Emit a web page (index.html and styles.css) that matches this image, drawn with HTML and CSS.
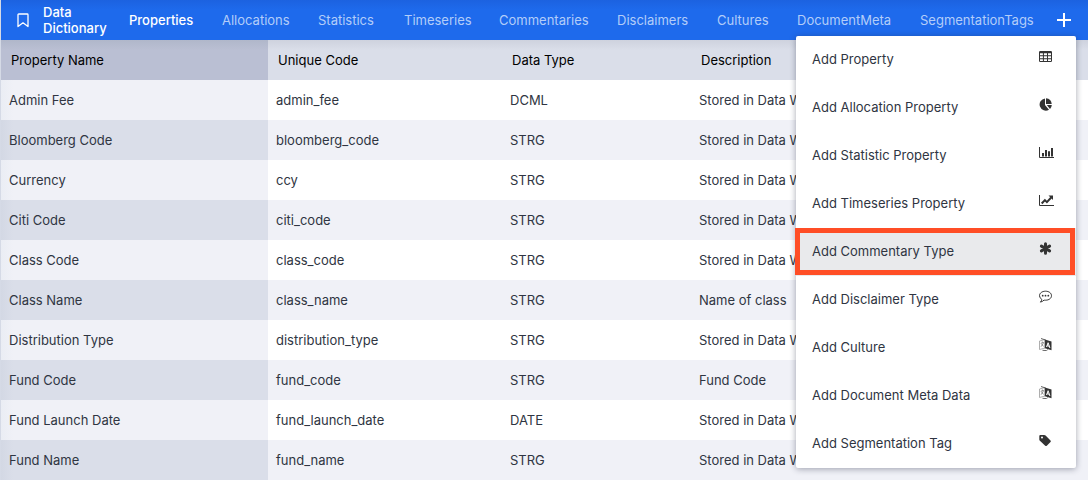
FILE: index.html
```html
<!DOCTYPE html>
<html lang="en">
<head>
<meta charset="utf-8">
<title>Data Dictionary</title>
<link rel="stylesheet" href="styles.css">
</head>
<body>
<svg class="sprite" aria-hidden="true">
  <symbol id="translate" viewBox="0 0 13 13">
    <path d="M.5 3 6 1.500V10L.5 11.500z" fill="#fff" stroke="#999" stroke-width=".8"/>
    <path d="M1.700 5.400 5 4.500M3.300 3.500v1.500M2 8.700l2.400-3.400M2.400 6.300l2.300 2" fill="none" stroke="#777" stroke-width=".8"/>
    <path d="M2 .5 6.500 2M3.500 12.300l4 .3 1.200-1" fill="none" stroke="#555" stroke-width=".9"/>
    <path d="m5.800 1.500 6.700 2v8.700l-6.700-2z"/>
    <path d="m7.500 9 1.600-4.300 1.800 5.300M8 7.700l2.400.6" fill="none" stroke="#fff" stroke-width="1"/>
  </symbol>
</svg>
<header class="topbar">
  <a class="brand" href="#">
    <svg class="brand-icon" viewBox="0 0 12 15"><path d="M1 1.800Q1 1 1.800 1h8.400q.8 0 .8.800V13.500L6 9.800 1 13.500z" fill="none" stroke="currentColor" stroke-width="1.300" stroke-linejoin="round"/></svg>
    <span>Data Dictionary</span>
  </a>
  <nav class="tabs">
    <a class="tab tab-active" href="#">Properties</a>
    <a class="tab" href="#">Allocations</a>
    <a class="tab" href="#">Statistics</a>
    <a class="tab" href="#">Timeseries</a>
    <a class="tab" href="#">Commentaries</a>
    <a class="tab" href="#">Disclaimers</a>
    <a class="tab" href="#">Cultures</a>
    <a class="tab" href="#">DocumentMeta</a>
    <a class="tab" href="#">SegmentationTags</a>
  </nav>
  <button class="add" type="button" aria-label="Add"><svg class="add-icon" viewBox="0 0 14 14"><path d="M7 0v14M0 7h14" stroke="currentColor" stroke-width="2"/></svg></button>
  <div class="menu">
    <button class="menu-item" type="button">Add Property
      <svg class="icon" viewBox="0 0 13 13"><path fill-rule="evenodd" d="M1.200 1h10.600q1.200 0 1.200 1.200v8.600q0 1.200-1.200 1.200H1.200Q0 12 0 10.800V2.200Q0 1 1.200 1zM1 3.200v2h2.900v-2zm3.900 0v2H8v-2zm4.100 0v2h3v-2zM1 6.200v2h2.900v-2zm3.900 0v2H8v-2zm4.100 0v2h3v-2zM1 9.200V11h2.900V9.200zm3.900 0V11H8V9.200zm4.100 0V11h3V9.200z"/></svg></button>
    <button class="menu-item" type="button">Add Allocation Property
      <svg class="icon" viewBox="0 0 13 13"><path d="M6 .5V7l4 4.700A6.100 6.100 0 1 1 6 .5z"/><path d="M7 .3a6.200 6.200 0 0 1 5.700 5.800H7z"/><path d="M7.800 7h5a6 6 0 0 1-1.800 4z"/></svg></button>
    <button class="menu-item" type="button">Add Statistic Property
      <svg class="icon icon-wide" viewBox="0 0 15 13"><path d="M.5 1v10.500H15" fill="none" stroke="#333"/><path d="M3 7h2v3.500H3zM6 4h2v6.500H6zM9 5.200h2v5.300H9zM12 2h2v8.500h-2z"/></svg></button>
    <button class="menu-item" type="button">Add Timeseries Property
      <svg class="icon icon-wide" viewBox="0 0 15 13"><path d="M.5 1v10.500H15" fill="none" stroke="#333"/><path d="m2.700 9.500 3.200-3.400 2 2 4.300-4.600" fill="none" stroke="#333" stroke-width="2"/><path d="M9.500 1.500H14V6z"/></svg></button>
    <button class="menu-item menu-item-marked" type="button">Add Commentary Type
      <svg class="icon" viewBox="0 0 13 13"><path d="M6.500 1.800v9.400M2.400 4.100l8.200 4.800M2.400 8.900l8.200-4.800" fill="none" stroke="#333" stroke-width="3" stroke-linecap="round"/></svg></button>
    <button class="menu-item" type="button">Add Disclaimer Type
      <svg class="icon" viewBox="0 0 13 13"><path d="M6.500 1.200c3.400 0 6 1.900 6 4.500s-2.600 4.500-6 4.500q-.8 0-1.500-.1-1.400 1.600-3.600 2 1.300-1.200 1.400-2.800Q.5 8 .5 5.700c0-2.600 2.600-4.500 6-4.500z" fill="none" stroke="#333" stroke-width="1"/><circle cx="3.700" cy="5.700" r=".9"/><circle cx="6.500" cy="5.700" r=".9"/><circle cx="9.300" cy="5.700" r=".9"/></svg></button>
    <button class="menu-item" type="button">Add Culture
      <svg class="icon"><use href="#translate"/></svg></button>
    <button class="menu-item" type="button">Add Document Meta Data
      <svg class="icon"><use href="#translate"/></svg></button>
    <button class="menu-item" type="button">Add Segmentation Tag
      <svg class="icon" viewBox="0 0 13 13"><path fill-rule="evenodd" d="M.3 2Q.3.900 1.400.9h3.800q.8 0 1.400.6l4.900 4.900q.8.800 0 1.600l-3.700 3.700q-.8.800-1.600 0L.9 6.800Q.3 6.200.3 5.400zM3 2.400A1 1 0 1 0 3 4.400 1 1 0 1 0 3 2.400z"/></svg></button>
  </div>
</header>
<table class="grid">
  <colgroup><col class="col-name"><col class="col-code"><col class="col-type"><col></colgroup>
  <thead><tr><th>Property Name</th><th>Unique Code</th><th>Data Type</th><th>Description</th></tr></thead>
  <tbody>
    <tr><td>Admin Fee</td><td>admin_fee</td><td>DCML</td><td>Stored in Data Warehouse</td></tr>
    <tr><td>Bloomberg Code</td><td>bloomberg_code</td><td>STRG</td><td>Stored in Data Warehouse</td></tr>
    <tr><td>Currency</td><td>ccy</td><td>STRG</td><td>Stored in Data Warehouse</td></tr>
    <tr><td>Citi Code</td><td>citi_code</td><td>STRG</td><td>Stored in Data Warehouse</td></tr>
    <tr><td>Class Code</td><td>class_code</td><td>STRG</td><td>Stored in Data Warehouse</td></tr>
    <tr><td>Class Name</td><td>class_name</td><td>STRG</td><td>Name of class</td></tr>
    <tr><td>Distribution Type</td><td>distribution_type</td><td>STRG</td><td>Stored in Data Warehouse</td></tr>
    <tr><td>Fund Code</td><td>fund_code</td><td>STRG</td><td>Fund Code</td></tr>
    <tr><td>Fund Launch Date</td><td>fund_launch_date</td><td>DATE</td><td>Stored in Data Warehouse</td></tr>
    <tr><td>Fund Name</td><td>fund_name</td><td>STRG</td><td>Stored in Data Warehouse</td></tr>
  </tbody>
</table>
</body>
</html>
```
FILE: styles.css
```css
* { box-sizing: border-box; }

body {
  margin: 0;
  border-left: 1px solid #d5dae6;
  background: #fff;
  color: #2f3542;
  font: 13px/16px Inter, "Open Sans", sans-serif;
}

.sprite { position: absolute; width: 0; height: 0; }

.topbar {
  position: relative;
  display: flex;
  align-items: center;
  height: 40px;
  background: linear-gradient(#1c62e0, #1e6aec 10px);
  color: #fff;
}

.brand {
  display: flex;
  align-items: center;
  gap: 14px;
  width: 128px;
  padding-left: 16px;
  color: #fff;
  font-weight: 500;
  text-decoration: none;
}

.brand-icon { flex: none; width: 12px; height: 15px; }

.tabs {
  flex: 1;
  display: grid;
  grid-template-columns: 93fr 96fr 86fr 95fr 118fr 100fr 80fr 123fr 137fr;
}

.tab { color: #b3cdf9; text-decoration: none; }
.tab-active { color: #fff; font-weight: 500; }

.add {
  width: 31px;
  height: 40px;
  padding: 0;
  border: 0;
  background: none;
  color: #fff;
}

.add-icon { display: block; width: 14px; height: 14px; }

.menu {
  position: absolute;
  top: 36px;
  right: 12px;
  z-index: 1;
  width: 280px;
  border-radius: 2px;
  background: #fff;
  box-shadow: 0 1px 6px rgba(30, 35, 60, 0.4);
}

.menu-item {
  position: relative;
  display: flex;
  align-items: center;
  justify-content: space-between;
  width: 100%;
  height: 48px;
  padding: 0 22px 2px 16px;
  border: 0;
  background: none;
  color: #2f3542;
  font: inherit;
  text-align: left;
}

.menu-item-marked { background: #e9eaec; }

.menu-item-marked::after {
  content: "";
  position: absolute;
  inset: 0 1px 1px -1px;
  border: 5px solid #ff4e26;
}

.icon {
  width: 13px;
  height: 13px;
  margin: 0 2px 5px 0;
  fill: #333;
}

.icon-wide { width: 15px; margin-right: 0; }

.grid { width: 100%; border-collapse: collapse; table-layout: fixed; }
.col-name { width: 267px; }
.col-code { width: 234px; }
.col-type { width: 189px; }

th, td {
  height: 40px;
  padding: 0 8px;
  overflow: hidden;
  text-align: left;
  white-space: nowrap;
}

th {
  padding: 0 10px;
  background: linear-gradient(#ced2de, #dadee9 10px);
  color: #000;
  font-weight: 400;
}

th:first-child { background: linear-gradient(#b0b7ca, #babfd3 10px); }
tbody tr:nth-child(even) { background: #f0f1f7; }
td:first-child { background: linear-gradient(90deg, #eaedf4, #f0f1f7 12px); }
tbody tr:nth-child(even) td:first-child { background: linear-gradient(90deg, #d3d8e4, #dadee9 12px); }
```
